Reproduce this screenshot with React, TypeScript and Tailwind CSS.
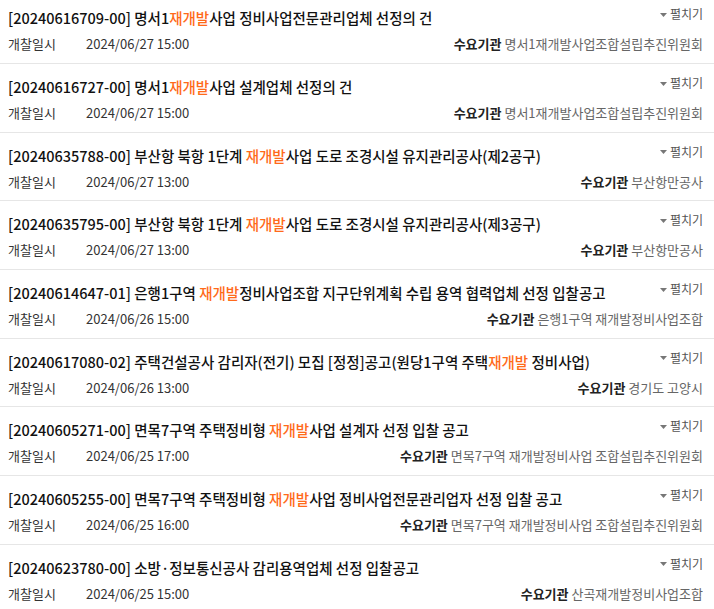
import React from "react";

type Item = { no: string; title: string; date: string; org: string };

const items: Item[] = [
  { no: "20240616709-00", title: "명서1재개발사업 정비사업전문관리업체 선정의 건", date: "2024/06/27 15:00", org: "명서1재개발사업조합설립추진위원회" },
  { no: "20240616727-00", title: "명서1재개발사업 설계업체 선정의 건", date: "2024/06/27 15:00", org: "명서1재개발사업조합설립추진위원회" },
  { no: "20240635788-00", title: "부산항 북항 1단계 재개발사업 도로 조경시설 유지관리공사(제2공구)", date: "2024/06/27 13:00", org: "부산항만공사" },
  { no: "20240635795-00", title: "부산항 북항 1단계 재개발사업 도로 조경시설 유지관리공사(제3공구)", date: "2024/06/27 13:00", org: "부산항만공사" },
  { no: "20240614647-01", title: "은행1구역 재개발정비사업조합 지구단위계획 수립 용역 협력업체 선정 입찰공고", date: "2024/06/26 15:00", org: "은행1구역 재개발정비사업조합" },
  { no: "20240617080-02", title: "주택건설공사 감리자(전기) 모집 [정정]공고(원당1구역 주택재개발 정비사업)", date: "2024/06/26 13:00", org: "경기도 고양시" },
  { no: "20240605271-00", title: "면목7구역 주택정비형 재개발사업 설계자 선정 입찰 공고", date: "2024/06/25 17:00", org: "면목7구역 재개발정비사업 조합설립추진위원회" },
  { no: "20240605255-00", title: "면목7구역 주택정비형 재개발사업 정비사업전문관리업자 선정 입찰 공고", date: "2024/06/25 16:00", org: "면목7구역 재개발정비사업 조합설립추진위원회" },
  { no: "20240623780-00", title: "소방·정보통신공사 감리용역업체 선정 입찰공고", date: "2024/06/25 15:00", org: "산곡재개발정비사업조합" },
];

function Highlight({ text }: { text: string }) {
  const parts = text.split("재개발");
  return (
    <>
      {parts.map((p, i) => (
        <React.Fragment key={i}>
          {i > 0 && <span className="text-[#ff6a1a]">재개발</span>}
          {p}
        </React.Fragment>
      ))}
    </>
  );
}

function Row({ item }: { item: Item }) {
  return (
    <div className="border-b border-[#e6e6e6] pl-2 pr-[11px] pt-[11px] pb-[8.7px]">
      <div className="flex items-start justify-between">
        <div className="text-[14.5px] leading-[23px] font-medium text-[#111] whitespace-nowrap">
          [{item.no}] <Highlight text={item.title} />
        </div>
        <button className="flex items-center gap-[3px] text-[12px] leading-[16px] text-[#555] whitespace-nowrap">
          <svg width="7" height="4" viewBox="0 0 7 4" className="mt-[1px]">
            <path d="M0 0 L7 0 L3.5 4 Z" fill="#777" />
          </svg>
          펼치기
        </button>
      </div>
      <div className="mt-[5px] flex h-[20px] items-center justify-between text-[13px] leading-[20px]">
        <div className="flex text-[#333]">
          <span className="w-[78px]">개찰일시</span>
          <span>{item.date}</span>
        </div>
        <div className="whitespace-nowrap">
          <span className="font-bold text-[#222]">수요기관</span>{" "}
          <span className="text-[#666]">{item.org}</span>
        </div>
      </div>
    </div>
  );
}

export default function App() {
  return (
    <div className="h-[609px] overflow-hidden bg-white [font-family:'Noto_Sans_CJK_KR',sans-serif]">
      <div className="-mt-[4.7px]">
        {items.map((it) => (
          <Row key={it.no} item={it} />
        ))}
      </div>
    </div>
  );
}
